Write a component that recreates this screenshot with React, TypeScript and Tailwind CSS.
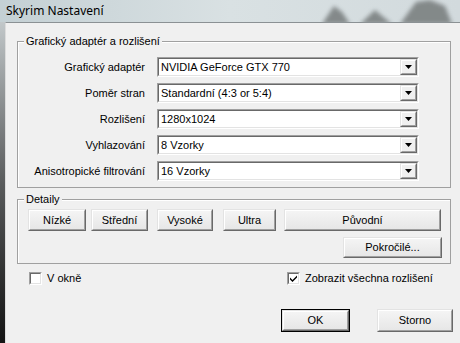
import React from "react";

// --- Classic Win32 controls ---
const sunken = "border border-t-[#a0a0a0] border-l-[#a0a0a0] border-b-white border-r-white";
const sunkenInner = "border border-t-[#696969] border-l-[#696969] border-b-[#e3e3e3] border-r-[#e3e3e3]";
const raised = "border border-t-[#e3e3e3] border-l-[#e3e3e3] border-b-[#696969] border-r-[#696969]";
const raisedInner = "border border-t-white border-l-white border-b-[#a0a0a0] border-r-[#a0a0a0]";

function Arrow() {
  return (
    <svg width="7" height="4" viewBox="0 0 7 4">
      <path d="M0 0H7L3.5 4Z" fill="#000" />
    </svg>
  );
}

function Combo({ value }: { value: string }) {
  return (
    <div className={`h-[20px] w-[262px] ${sunken}`}>
      <div className={`h-full flex bg-white ${sunkenInner}`}>
        <span className="flex-1 pl-[2px] leading-[16px] whitespace-nowrap overflow-hidden">{value}</span>
        <div className={`w-[17px] h-full bg-[#f0f0f0] ${raised}`}>
          <div className={`h-full flex items-center justify-center ${raisedInner}`}>
            <Arrow />
          </div>
        </div>
      </div>
    </div>
  );
}

function Button({ label, className = "", isDefault = false }: { label: string; className?: string; isDefault?: boolean }) {
  const body = (
    <div className={`h-full bg-linear-to-b from-[#f5f5f5] to-[#e6e6e6] ${raised}`}>
      <div className={`h-full flex items-center justify-center ${raisedInner}`}>{label}</div>
    </div>
  );
  return (
    <div className={`${className} ${isDefault ? "border border-black" : ""}`}>
      {body}
    </div>
  );
}

function Checkbox({ checked, label }: { checked: boolean; label: string }) {
  return (
    <div className="flex items-center gap-[5px] h-[13px]">
      <div className={`w-[13px] h-[13px] ${sunken}`}>
        <div className={`w-full h-full bg-white flex items-center justify-center ${sunkenInner}`}>
          {checked && (
            <svg width="7" height="7" viewBox="0 0 7 7">
              <path d="M0 2.5L2.5 5L7 0.5V2.5L2.5 7L0 4.5Z" fill="#000" />
            </svg>
          )}
        </div>
      </div>
      <span className="leading-[13px]">{label}</span>
    </div>
  );
}

function Group({ title, className = "", children }: { title: string; className?: string; children: React.ReactNode }) {
  return (
    <div className={`relative w-[434px] border border-[#a0a0a0] shadow-[inset_1px_1px_0_#fff] ${className}`}>
      <span className="absolute left-[6px] -top-[8px] px-[2px] bg-[#f0f0f0] leading-[14px]">{title}</span>
      {children}
    </div>
  );
}

const rows: [string, string][] = [
  ["Grafický adaptér", "NVIDIA GeForce GTX 770"],
  ["Poměr stran", "Standardní (4:3 or 5:4)"],
  ["Rozlišení", "1280x1024"],
  ["Vyhlazování", "8 Vzorky"],
  ["Anisotropické filtrování", "16 Vzorky"],
];

export default function App() {
  return (
    <div
      className="w-[460px] h-[343px] flex flex-col overflow-hidden bg-[#f0f0f0] text-[11px] text-black"
      style={{ fontFamily: '"Liberation Sans", Arial, sans-serif' }}
    >
      {/* title bar */}
      <div className="relative h-[22px] flex items-center bg-linear-to-r from-[#c4d0d4] via-[#d9e1e3] to-[#d2dadd] overflow-hidden">
        <svg className="absolute right-0 top-0" width="140" height="22" viewBox="0 0 140 22">
          <defs>
            <filter id="b" x="-20%" y="-20%" width="140%" height="140%">
              <feGaussianBlur stdDeviation="2" />
            </filter>
          </defs>
          <g filter="url(#b)" fill="#6f7475" opacity="0.8">
            <path d="M2 24L14 6L22 12L30 24Z" />
            <path d="M40 24L55 10L62 16L72 24Z" />
            <path d="M80 24L96 2L110 0L125 6L132 24Z" />
          </g>
        </svg>
        <span
          className="relative pl-[6px] text-[12px] leading-none"
          style={{ fontFamily: '"Noto Sans", "Open Sans", sans-serif' }}
        >
          Skyrim Nastavení
        </span>
      </div>

      <div className="flex flex-1 min-h-0">
        <div className="w-[5px] bg-linear-to-b from-[#c2c8ca] via-[#5a5c5d] to-[#141414]" />
        <div className="flex-1 border-t border-l border-t-[#8b9194] border-l-[#dcdcdc] flex flex-col">
          <Group title="Grafický adaptér a rozlišení" className="ml-[11px] mt-[18px] pt-[15px] pb-[6px]">
            <div className="grid grid-cols-[127px_262px] gap-x-[12px] gap-y-[6px]">
              {rows.map(([label, value]) => (
                <React.Fragment key={label}>
                  <span className="text-right leading-[20px] whitespace-nowrap">{label}</span>
                  <Combo value={value} />
                </React.Fragment>
              ))}
            </div>
          </Group>

          <Group title="Detaily" className="ml-[11px] mt-[11px] pt-[9px] pb-[5px]">
            <div className="flex h-[22px]">
              <Button label="Nízké" className="ml-[10px] w-[58px]" />
              <Button label="Střední" className="ml-[5px] w-[57px]" />
              <Button label="Vysoké" className="ml-[9px] w-[56px]" />
              <Button label="Ultra" className="ml-[10px] w-[53px]" />
              <Button label="Původní" className="ml-[8px] w-[157px]" />
            </div>
            <div className="flex h-[21px] mt-[6px]">
              <Button label="Pokročilé..." className="ml-[325px] w-[99px]" />
            </div>
          </Group>

          <div className="flex mt-[8px] pl-[23px]">
            <div className="w-[258px]">
              <Checkbox checked={false} label="V okně" />
            </div>
            <Checkbox checked label="Zobrazit všechna rozlišení" />
          </div>

          <div className="flex mt-[24px] h-[23px]">
            <Button label="OK" isDefault className="ml-[275px] w-[69px]" />
            <Button label="Storno" className="ml-[27px] w-[76px]" />
          </div>
        </div>
      </div>
    </div>
  );
}
